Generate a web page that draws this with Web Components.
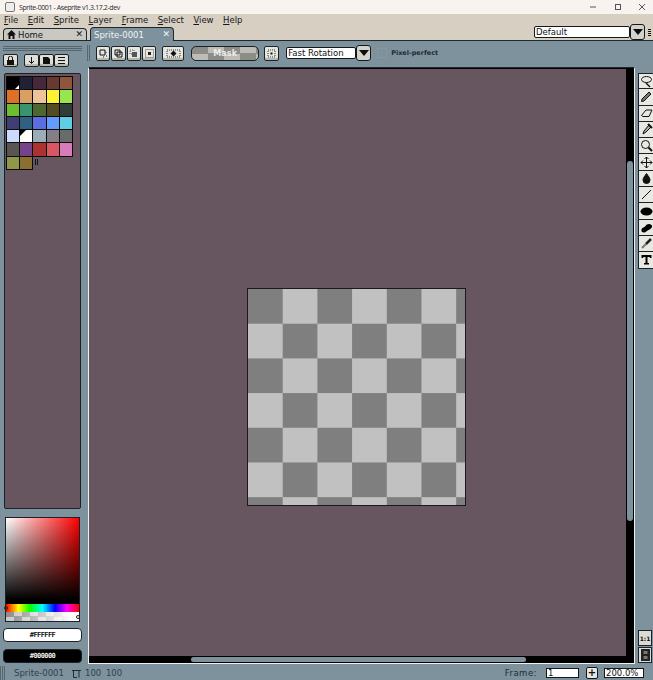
<!DOCTYPE html>
<html>
<head>
<meta charset="utf-8">
<style>
  html, body { margin: 0; padding: 0; height: 100%; overflow: hidden; }
  body { font-family: "DejaVu Sans", sans-serif; }
</style>
</head>
<body>
<as-app>
  <as-title-bar slot="title" text="Sprite-0001 - Aseprite v1.3.17.2-dev"></as-title-bar>
  <as-menu-bar slot="menu"></as-menu-bar>
  <as-tab-bar slot="tabs"></as-tab-bar>
  <as-left-pane slot="left"></as-left-pane>
  <as-context-bar slot="context"></as-context-bar>
  <as-editor slot="editor"></as-editor>
  <as-tool-bar slot="tools"></as-tool-bar>
  <as-status-bar slot="status"></as-status-bar>
</as-app>

<script>
// shared bits
const TEAL = "#7d929c";
const BROWN = "#67565f";
const svg = (inner, s = 13) =>
  `<svg xmlns="http://www.w3.org/2000/svg" width="${s}" height="${s}" viewBox="0 0 13 13" fill="none" stroke="#111" stroke-width="1">${inner}</svg>`;

class AsButton extends HTMLElement {
  constructor() {
    super();
    this._shadowRoot = this.attachShadow({ mode: "open" });
    this._shadowRoot.innerHTML = `
      <style>
        :host {
          display: flex; align-items: center; justify-content: center;
          box-sizing: border-box; width: var(--w, 14px); height: var(--h, 14px);
          background: var(--bg, #e6e6e0); border: 1px solid #1d2226; border-radius: 2px;
          box-shadow: inset 0 -2px 0 #b7b7ae;
          flex: none;
        }
        ::slotted(svg) { display: block; }
      </style>
      <slot></slot>`;
  }
}
customElements.define("as-button", AsButton);

class AsCombo extends HTMLElement {
  constructor() {
    super();
    this._shadowRoot = this.attachShadow({ mode: "open" });
  }
  connectedCallback() {
    this._shadowRoot.innerHTML = `
      <style>
        :host { display: flex; align-items: center; flex: none; }
        .field {
          box-sizing: border-box; width: var(--field, 70px); height: 12px; background: #fff;
          border: 1px solid #14181b; border-radius: 2px; padding-left: 1px;
          font: 8.500px/10px "DejaVu Sans", sans-serif; color: #111; white-space: nowrap; overflow: hidden;
        }
        .arrow {
          box-sizing: border-box; width: 15px; height: 16px; background: #d3d3cc;
          border: 1px solid #14181b; border-radius: 3px; display: flex; align-items: center; justify-content: center;
        }
        .arrow i { width: 0; height: 0; border: 5px solid transparent; border-top: 6px solid #0c0c0c; border-bottom: 0; }
      </style>
      <div class="field">${this.getAttribute("text")}</div>
      <div class="arrow"><i></i></div>`;
  }
}
customElements.define("as-combo", AsCombo);

class AsTitleBar extends HTMLElement {
  constructor() {
    super();
    this._shadowRoot = this.attachShadow({ mode: "open" });
  }
  connectedCallback() {
    this._shadowRoot.innerHTML = `
      <style>
        :host {
          display: flex; align-items: center; height: 14px; background: #f9f3ef; color: #2a2a2a;
          font: 7px "Open Sans", sans-serif;
        }
        .logo { width: 8px; height: 8px; margin: 0 4px 0 5px; border: 1px solid #777; border-radius: 2px; background: #eee; flex: none; }
        .txt { flex: 1; letter-spacing: -.4px; }
        .ctl { display: flex; gap: 16.500px; flex: none; padding-right: 7px; }
        svg { display: block; }
      </style>
      <span class="logo"></span>
      <span class="txt">${this.getAttribute("text")}</span>
      <div class="ctl">
        <svg width="8" height="8" viewBox="0 0 8 8"><path d="M1 4h6" stroke="#555"/></svg>
        <svg width="8" height="8" viewBox="0 0 8 8"><rect x="1.500" y="1.500" width="5" height="5" fill="none" stroke="#555"/></svg>
        <svg width="8" height="8" viewBox="0 0 8 8"><path d="M1 1l6 6M7 1l-6 6" stroke="#555"/></svg>
      </div>`;
  }
}
customElements.define("as-title-bar", AsTitleBar);

class AsMenuBar extends HTMLElement {
  constructor() {
    super();
    this._shadowRoot = this.attachShadow({ mode: "open" });
    const items = ["File", "Edit", "Sprite", "Layer", "Frame", "Select", "View", "Help"];
    this._shadowRoot.innerHTML = `
      <style>
        :host {
          display: flex; height: 12px; align-items: center; gap: 9.500px; padding-left: 4px; background: #d6cfc2;
          font: 8.500px "DejaVu Sans", sans-serif; color: #15171a;
        }
        b { display: block; font-weight: normal; }
        b::first-letter { text-decoration: underline; }
      </style>
      ${items.map(t => `<b>${t}</b>`).join("")}`;
  }
}
customElements.define("as-menu-bar", AsMenuBar);

class AsTabBar extends HTMLElement {
  constructor() {
    super();
    this._shadowRoot = this.attachShadow({ mode: "open" });
    this._shadowRoot.innerHTML = `
      <style>
        :host {
          display: flex; align-items: flex-end; height: 14px; background: #d6cfc2;
          border-bottom: 1px solid #20282d; padding-left: 3px;
          font: 8.500px "DejaVu Sans", sans-serif;
        }
        .tab {
          box-sizing: border-box; display: flex; align-items: center; justify-content: space-between;
          border: 1px solid #20282d; border-bottom: 0; border-radius: 4px 4px 0 0;
          padding: 0 3px; flex: none;
        }
        .home { width: 84px; height: 12px; background: #c9c8c1; color: #15171a; }
        .home span { display: flex; align-items: center; gap: 2px; }
        .sprite { width: 84px; height: 14px; margin-left: 3px; background: ${TEAL}; color: #f2f4f5; position: relative; top: 1px; }
        .x { font-size: 9px; line-height: 1; }
        as-combo { margin: -2px 0 0 360px; align-self: flex-start; --field: 96px; }
        .grip { width: 3px; height: 8px; margin-left: 3px; align-self: center; background: repeating-linear-gradient(#111 0 1px, transparent 1px 2px); flex: none; }
      </style>
      <div class="tab home"><span><svg width="9" height="9" viewBox="0 0 9 9"><path d="M4.500 0L9 4.500H7.500V9H5.500V6H3.500V9H1.500V4.500H0Z" fill="#111"/></svg>Home</span><span class="x">✕</span></div>
      <div class="tab sprite"><span>Sprite-0001</span><span class="x">✕</span></div>
      <as-combo text="Default"></as-combo>
      <div class="grip"></div>`;
  }
}
customElements.define("as-tab-bar", AsTabBar);

class AsPalette extends HTMLElement {
  constructor() {
    super();
    this._shadowRoot = this.attachShadow({ mode: "open" });
    const colors = [
      "#000000","#222034","#45283c","#663931","#8f563b",
      "#df7126","#d9a066","#eec39a","#fbf236","#99e550",
      "#6abe30","#37946e","#4b692f","#524b24","#323c39",
      "#3f3f74","#306082","#5b6ee1","#639bff","#5fcde4",
      "#cbdbfc","#ffffff","#9badb7","#847e87","#696a6a",
      "#595652","#76428a","#ac3232","#d95763","#d77bba",
      "#8f974a","#8a6f30"];
    this._shadowRoot.innerHTML = `
      <style>
        :host {
          display: block; flex: 1; box-sizing: border-box; background: ${BROWN};
          border: 1px solid #1b2126; border-radius: 2px; padding: 2px 0 0 1px; position: relative;
        }
        .grid {
          display: grid; grid-template-columns: repeat(5, 12.200px); grid-auto-rows: 12.300px; gap: 1px;
          width: max-content; padding: 1px;
        }
        .grid div { position: relative; outline: 1px solid #0b0b0b; }
        .fg::after { content: ""; position: absolute; right: 0; bottom: 0; border: 2px solid; border-color: transparent #fff #fff transparent; }
        .bg::after { content: ""; position: absolute; left: 0; top: 0; border: 3.500px solid; border-color: #000 transparent transparent #000; }
        .grip { position: absolute; left: 30px; top: 85px; width: 3px; height: 6px; border-left: 1px solid #111; border-right: 1px solid #111; box-sizing: border-box; }
      </style>
      <div class="grid">
        ${colors.map((c, i) => `<div class="${i == 0 ? "fg" : i == 21 ? "bg" : ""}" style="background:${c}"></div>`).join("")}
      </div>
      <div class="grip"></div>`;
  }
}
customElements.define("as-palette", AsPalette);

class AsColorPicker extends HTMLElement {
  constructor() {
    super();
    this._shadowRoot = this.attachShadow({ mode: "open" });
    this._shadowRoot.innerHTML = `
      <style>
        :host { display: flex; flex-direction: column; box-sizing: border-box; height: 105px; width: 75px; margin: 1px 0 0 2px; border: 1px solid #1b2126; background: #000; flex: none; position: relative; }
        .sv { flex: 1; background: linear-gradient(to bottom, transparent, #000 95%), linear-gradient(to right, #fff, #f00); }
        .hue { height: 8px; background: linear-gradient(to right, #f00, #ff0 17%, #0f0 33%, #0ff 50%, #00f 67%, #f0f 83%, #f00); }
        .alpha { height: 9px; background:
          linear-gradient(to right, transparent, #fff 90%),
          conic-gradient(#c8c8c8 25%, #8a8a8a 0 50%, #c8c8c8 0 75%, #8a8a8a 0) 0 0 / 16px 9px; }
        .dot { position: absolute; width: 2px; height: 2px; border: 1px solid #222; border-radius: 50%; }
      </style>
      <div class="sv"></div><div class="hue"></div><div class="alpha"></div>
      <div class="dot" style="left:-2px;bottom:11px"></div>
      <div class="dot" style="right:-1px;bottom:2px;background:#fff"></div>`;
  }
}
customElements.define("as-color-picker", AsColorPicker);

class AsColorButton extends HTMLElement {
  constructor() {
    super();
    this._shadowRoot = this.attachShadow({ mode: "open" });
  }
  connectedCallback() {
    const bg = this.getAttribute("bg");
    const fg = this.getAttribute("fg");
    this._shadowRoot.innerHTML = `
      <style>
        :host {
          display: flex; align-items: center; justify-content: center; box-sizing: border-box;
          width: 79px; height: 14px; flex: none; background: ${bg}; color: ${fg};
          border: 1px solid #1b2126; border-radius: 4px; font: bold 7px "DejaVu Sans Mono", monospace; letter-spacing: -.6px;
        }
      </style>${this.getAttribute("text")}`;
  }
}
customElements.define("as-color-button", AsColorButton);

class AsLeftPane extends HTMLElement {
  constructor() {
    super();
    this._shadowRoot = this.attachShadow({ mode: "open" });
    this._shadowRoot.innerHTML = `
      <style>
        :host { display: flex; flex-direction: column; width: 87px; box-sizing: border-box; padding: 5px 0 1px 3px; flex: none; }
        .grip { height: 5px; width: 79px; background: repeating-linear-gradient(#56666f 0 1px, ${TEAL} 1px 2px); flex: none; }
        .btns { display: flex; margin-top: 3px; height: 13px; flex: none; }
        as-button { --h: 13px; --w: 15px; --bg: #dfdfd8; }
        .lock { margin-right: 6px; }
        as-palette { margin: 6px 0 7px 1px; width: 77px; flex: 1; }
        as-color-button { margin-top: 6px; }
        as-color-button + as-color-button { margin-top: 7px; }
      </style>
      <div class="grip"></div>
      <div class="btns">
        <as-button class="lock"><svg width="9" height="9" viewBox="0 0 9 9"><path d="M1 4h7v5H1z" fill="#111"/><path d="M2.500 4V2a2 2 0 0 1 4 0v2" stroke="#111" fill="none"/></svg></as-button>
        <as-button><svg width="9" height="9" viewBox="0 0 9 9"><path d="M4.500 1v6M2 5l2.500 2.500L7 5" stroke="#111" fill="none"/></svg></as-button>
        <as-button><svg width="9" height="9" viewBox="0 0 9 9"><path d="M1 1h5l2 2v5H1z" fill="#111"/></svg></as-button>
        <as-button><svg width="9" height="9" viewBox="0 0 9 9"><path d="M1 1.500h7M1 4.500h7M1 7.500h7" stroke="#111"/></svg></as-button>
      </div>
      <as-palette></as-palette>
      <as-color-picker></as-color-picker>
      <as-color-button text="#FFFFFF" bg="#fff" fg="#111"></as-color-button>
      <as-color-button text="#000000" bg="#000" fg="#eee"></as-color-button>`;
  }
}
customElements.define("as-left-pane", AsLeftPane);

class AsContextBar extends HTMLElement {
  constructor() {
    super();
    this._shadowRoot = this.attachShadow({ mode: "open" });
    this._shadowRoot.innerHTML = `
      <style>
        :host { display: flex; align-items: center; height: 26px; flex: none; box-sizing: border-box; padding: 0 0 2px 0; font: 9px "DejaVu Sans", sans-serif; }
        .grip { width: 4px; height: 16px; margin-right: 5px; background: repeating-linear-gradient(to right, #56666f 0 1px, ${TEAL} 1px 2px); flex: none; }
        .group { display: flex; gap: 1px; margin-right: 6px; }
        as-button { --w: 14.300px; --h: 15px; }
        .wide { --w: 22px; margin-right: 7px; }
        .mask {
          box-sizing: border-box; width: 68px; height: 15px; border: 1px solid #1b2126; border-radius: 5px;
          background: conic-gradient(#bdbdb6 25%, #8d8d88 0 50%, #bdbdb6 0 75%, #8d8d88 0) 0 0 / 32px 13px;
          color: #eaeaea; text-align: center; font: bold 8px/13px "DejaVu Sans", sans-serif; letter-spacing: .1px; flex: none;
        }
        .one { --w: 15px; margin: 0 7px 0 5px; }
        as-combo { --field: 70px; }
        .chk { width: 8px; height: 8px; margin: 0 4px 0 6px; border: 1px solid #84989f; flex: none; }
        .pp { font: bold 6.500px "DejaVu Sans", sans-serif; color: #1f2a32; }
      </style>
      <div class="grip"></div>
      <div class="group">
        <as-button><svg width="9" height="9" viewBox="0 0 9 9"><path d="M1 1h5v5H1z" stroke="#111" fill="none"/><path d="M7 3v1M7 7h1M4 8h1" stroke="#111"/></svg></as-button>
        <as-button><svg width="9" height="9" viewBox="0 0 9 9"><path d="M1 1h5v5H1zM3 3h5v5H3z" stroke="#111" fill="none"/></svg></as-button>
        <as-button><svg width="9" height="9" viewBox="0 0 9 9"><path d="M1 1h4v4H1z" stroke="#555" stroke-dasharray="1 1" fill="none"/><path d="M3 3h5v5H3z" fill="#555"/></svg></as-button>
        <as-button><svg width="9" height="9" viewBox="0 0 9 9"><path d="M.500 .500h8v8h-8z" stroke="#555" stroke-dasharray="1 1" fill="none"/><path d="M3 3h3v3H3z" fill="#222"/></svg></as-button>
      </div>
      <as-button class="wide"><svg width="15" height="9" viewBox="0 0 15 9"><path d="M1 1h13v7H1z" stroke="#333" stroke-dasharray="1 1" fill="none"/><path d="M7.500 1.500l3 3-3 3-3-3z" fill="#111"/></svg></as-button>
      <div class="mask">Mask</div>
      <as-button class="one"><svg width="9" height="9" viewBox="0 0 9 9"><path d="M1 1h7v7H1z" stroke="#333" stroke-dasharray="1 1" fill="none"/><path d="M3.500 3.500h2v2h-2z" fill="#111"/></svg></as-button>
      <as-combo text="Fast Rotation"></as-combo>
      <div class="chk"></div>
      <div class="pp">Pixel-perfect</div>`;
  }
}
customElements.define("as-context-bar", AsContextBar);

class AsEditor extends HTMLElement {
  constructor() {
    super();
    this._shadowRoot = this.attachShadow({ mode: "open" });
    this._shadowRoot.innerHTML = `
      <style>
        :host {
          display: flex; box-sizing: border-box; width: 547px; flex: none; position: relative;
          border: 1px solid #eef0f0; border-top-color: #20282d;
        }
        .view {
          flex: 1; box-sizing: border-box; background: ${BROWN}; border-style: solid; border-color: #000;
          border-width: 1px 8px 7px 0; padding: 219px 0 0 158px;
        }
        .sprite {
          box-sizing: border-box; width: 219px; height: 218px; border: 1px solid #1a1a1a;
          background: conic-gradient(#c1c1c1 25%, #7f7f7f 0 50%, #c1c1c1 0 75%, #7f7f7f 0) 0 0 / 69.400px 69.400px;
        }
        .thumb-v { position: absolute; top: 93px; right: 1px; width: 6px; height: 360px; background: ${TEAL}; border-radius: 3px; }
        .thumb-h { position: absolute; bottom: 1px; left: 102px; width: 335px; height: 5px; background: ${TEAL}; border-radius: 3px; }
      </style>
      <div class="view"><div class="sprite"></div></div>
      <div class="thumb-v"></div>
      <div class="thumb-h"></div>`;
  }
}
customElements.define("as-editor", AsEditor);

class AsToolBar extends HTMLElement {
  constructor() {
    super();
    this._shadowRoot = this.attachShadow({ mode: "open" });
    const icons = [
      '<ellipse cx="6.500" cy="4.500" rx="5" ry="3"/><path d="M6 8l4 4" stroke-width="1.500"/>',
      '<path d="M2 9L9 2l2 2-7 7-2.500.500z" fill="#777"/>',
      '<path d="M1.500 8.500L6 3h6l-3 6.500H3z"/>',
      '<path d="M9 2l2 2-5 5-3 2 1-3z" fill="#aaa"/><path d="M8 1l4 4" stroke-width="2"/>',
      '<circle cx="5.500" cy="5.500" r="4"/><path d="M8.500 8.500l3.500 3.500" stroke-width="2"/>',
      '<path d="M6.500 1v11M1 6.500h11M4.500 3l2-2 2 2M4.500 10l2 2 2-2M3 4.500l-2 2 2 2M10 4.500l2 2-2 2"/>',
      '<path d="M6.500 1.500c2 3 3.500 4.500 3.500 6.500a3.500 3.500 0 0 1-7 0c0-2 1.500-3.500 3.500-6.500z" fill="#111"/>',
      '<path d="M2 11L11 2"/>',
      '<ellipse cx="6.500" cy="6.500" rx="6" ry="4" fill="#000" stroke="none"/>',
      '<path d="M1.500 9c0-3 3-2 4-4s4-3 6-1-1 4-3 5-3 3-5 2.500-2-1-2-2.500z" fill="#000" stroke="none"/>',
      '<path d="M2 11l4-4" stroke="#777" stroke-width="2"/><path d="M6 7l5-5" stroke="#222" stroke-width="2.500"/>',
      '<path d="M1.500 2h10v3h-1.500l-.5-1H7.500v6H9v1.500H4V10h1.500V4H3.500l-.5 1H1.500z" fill="#000" stroke="none"/>'
    ];
    this._shadowRoot.innerHTML = `
      <style>
        :host { display: flex; flex-direction: column; flex: none; width: 15px; margin-left: 3px; padding-top: 6px; box-sizing: border-box; }
        .b { box-sizing: border-box; height: 16.300px; background: #e9e9e3; border: 1px solid #1b2126; border-right: 0; display: flex; align-items: center; justify-content: center; }
        .b + .b { border-top: 0; }
        .sp { flex: 1; }
        .low { padding-bottom: 1px; }
        .low .b { height: 16px; width: 14px; background: #dbdbd4; margin-top: 1px; border: 1px solid #1b2126; font: bold 6px "DejaVu Sans", sans-serif; color: #111; }
      </style>
      ${icons.map(i => `<div class="b">${svg(i)}</div>`).join("")}
      <div class="sp"></div>
      <div class="low">
        <div class="b">1:1</div>
        <div class="b"><svg width="9" height="12" viewBox="0 0 9 12"><path d="M0 0h9v12H0z" fill="#222"/><path d="M2.500 2h4v3h-4zM2.500 7h4v3h-4z" fill="#777"/></svg></div>
      </div>`;
  }
}
customElements.define("as-tool-bar", AsToolBar);

class AsStatusBar extends HTMLElement {
  constructor() {
    super();
    this._shadowRoot = this.attachShadow({ mode: "open" });
    this._shadowRoot.innerHTML = `
      <style>
        :host {
          display: flex; align-items: center; height: 16px; flex: none; box-sizing: border-box;
          font: 8.500px "DejaVu Sans", sans-serif; color: #2e3f4c; padding-top: 2px;
        }
        .grip { width: 5px; height: 14px; background: repeating-linear-gradient(to right, #56666f 0 1px, ${TEAL} 1px 2px); margin-right: 9px; flex: none; }
        .name { width: 58px; flex: none; }
        svg { margin-right: 4px; flex: none; }
        .size { word-spacing: 2px; flex: 1; }
        .frame { margin-right: 9px; color: #222c33; letter-spacing: .5px; }
        .inp { box-sizing: border-box; height: 10px; background: #fff; border: 1px solid #14181b; font-size: 8.500px; line-height: 8px; color: #111; padding-left: 1px; flex: none; }
        .plus { box-sizing: border-box; width: 12px; height: 12px; margin: 0 6px 0 7px; background: #e7e7e1; border: 1px solid #14181b; border-radius: 2px; font: bold 10px/10px "DejaVu Sans", sans-serif; color: #111; text-align: center; flex: none; }
      </style>
      <div class="grip"></div>
      <div class="name">Sprite-0001</div>
      <svg width="9" height="9" viewBox="0 0 9 9"><path d="M0 1.500h7v7M9 1.500H1.500v7H5" stroke="#1e2d38" fill="none"/></svg>
      <div class="size">100 100</div>
      <div class="frame">Frame:</div>
      <div class="inp" style="width:33px">1</div>
      <div class="plus">+</div>
      <div class="inp" style="width:40px;margin-right:9px">200.0%</div>`;
  }
}
customElements.define("as-status-bar", AsStatusBar);

class AsApp extends HTMLElement {
  constructor() {
    super();
    this._shadowRoot = this.attachShadow({ mode: "open" });
    this._shadowRoot.innerHTML = `
      <style>
        :host { display: flex; flex-direction: column; width: 653px; height: 680px; background: ${TEAL}; overflow: hidden; }
        .body { display: flex; flex: 1; min-height: 0; }
        .right { display: flex; flex-direction: column; flex: 1; min-width: 0; }
        .row { display: flex; flex: 1; min-height: 0; margin-left: 1px; }
      </style>
      <slot name="title"></slot>
      <slot name="menu"></slot>
      <slot name="tabs"></slot>
      <div class="body">
        <slot name="left"></slot>
        <div class="right">
          <slot name="context"></slot>
          <div class="row">
            <slot name="editor"></slot>
            <slot name="tools"></slot>
          </div>
        </div>
      </div>
      <slot name="status"></slot>`;
  }
}
customElements.define("as-app", AsApp);
</script>
</body>
</html>
